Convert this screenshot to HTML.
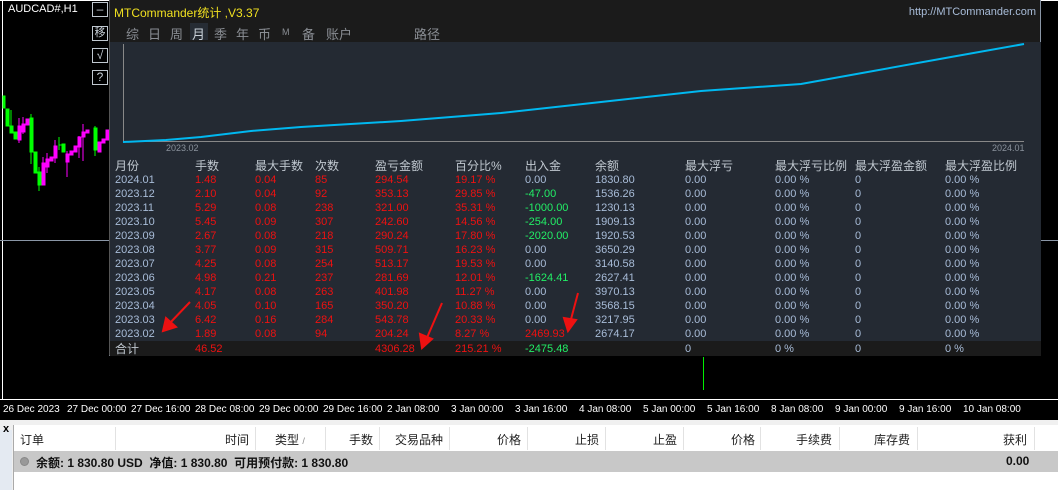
<!DOCTYPE html>
<html><head><meta charset="utf-8"><style>
*{margin:0;padding:0;box-sizing:border-box}
body{width:1058px;height:490px;background:#000;position:relative;overflow:hidden;font-family:"Liberation Sans","Noto Sans CJK SC",sans-serif}
.a{position:absolute;white-space:nowrap}
.btn{position:absolute;left:92px;width:16px;height:15px;border:1px solid #c0c8d0;color:#c8d0d8;font-size:12px;line-height:13px;text-align:center;background:#000}
#panel{position:absolute;left:109px;top:0;width:932px;height:356px;background:#1b1b1b;border-right:1px solid #8a96a6;border-bottom:1px solid #8a96a6;border-left:1px solid #555}
.t{font-size:13px;color:#8a8e94;position:absolute;top:24px}
.r{position:absolute;font-size:12px;line-height:14px;white-space:nowrap}
.m{color:#a8bcd8}.red{color:#ee1111}.g{color:#22ee66}.h{color:#c0c8d0}
.tl{position:absolute;top:404px;font-size:10px;color:#fff}
.bh{position:absolute;top:431px;font-size:12px;color:#222}
.dv{position:absolute;top:427px;width:1px;height:23px;background:#e2e2e2}
</style></head><body>
<div class="a" style="left:0;top:0;width:1058px;height:1px;background:#fff"></div>
<div class="a" style="left:2px;top:0;width:1px;height:400px;background:#fff"></div>
<div class="a" style="left:0;top:240px;width:109px;height:1px;background:#8a96a6"></div>
<div class="a" style="left:1041px;top:240px;width:17px;height:1px;background:#8a96a6"></div>
<div class="a" style="left:8px;top:3px;font-size:11px;color:#fff">AUDCAD#,H1</div>
<div class="btn" style="top:2px">–</div>
<div class="btn" style="top:26px;font-size:11px">移</div>
<div class="btn" style="top:48px">√</div>
<div class="btn" style="top:70px">?</div>
<svg class="a" style="left:0;top:60px" width="109" height="140">
<g fill="#00ff00" stroke="#00ff00">
<rect x="3" y="36" width="2" height="12"/><rect x="6" y="49" width="3" height="17"/><line x1="11" y1="50" x2="11" y2="72"/><rect x="10" y="66" width="3" height="7"/><rect x="14" y="72" width="3" height="7"/><rect x="30" y="58" width="3" height="34"/><line x1="31" y1="54" x2="31" y2="104"/><rect x="34" y="92" width="3" height="21"/><rect x="38" y="112" width="3" height="13"/><line x1="39" y1="107" x2="39" y2="131"/><rect x="62" y="84" width="3" height="8"/><line x1="59" y1="85" x2="63" y2="85"/><line x1="59" y1="77" x2="59" y2="90"/><rect x="94" y="68" width="3" height="22"/><line x1="95" y1="66" x2="95" y2="96"/></g>
<g fill="#ff00ff" stroke="#ff00ff">
<rect x="18" y="66" width="3" height="14"/><line x1="19" y1="58" x2="19" y2="83"/><rect x="22" y="64" width="3" height="8"/><line x1="23" y1="57" x2="23" y2="74"/><rect x="26" y="59" width="3" height="6"/><rect x="42" y="103" width="3" height="22"/><line x1="43" y1="97" x2="43" y2="125"/><rect x="46" y="99" width="3" height="8"/><line x1="47" y1="93" x2="47" y2="113"/><rect x="50" y="97" width="3" height="4"/><rect x="54" y="86" width="3" height="12"/><line x1="55" y1="80" x2="55" y2="103"/><rect x="66" y="94" width="3" height="8"/><line x1="67" y1="91" x2="67" y2="117"/><rect x="70" y="91" width="3" height="4"/><rect x="74" y="86" width="3" height="6"/><rect x="78" y="77" width="3" height="10"/><line x1="79" y1="76" x2="79" y2="98"/><rect x="82" y="72" width="3" height="5"/><line x1="83" y1="64" x2="83" y2="101"/><rect x="86" y="70" width="3" height="3"/><rect x="98" y="82" width="3" height="10"/><rect x="102" y="79" width="3" height="4"/><rect x="106" y="70" width="3" height="10"/></g>
</svg>
<div id="panel">
<div class="a" style="left:4px;top:4px;font-size:12px;color:#f0e020">MTCommander统计 ,V3.37</div>
<div class="a" style="right:4px;top:6px;font-size:11px;color:#a8bcd8">http://MTCommander.com</div>
<div class="t" style="left:16px">综</div><div class="t" style="left:38px">日</div><div class="t" style="left:60px">周</div>
<div class="a" style="left:80px;top:23px;width:18px;height:17px;background:#262c34"></div>
<div class="t" style="left:82px;color:#c8d0d8">月</div><div class="t" style="left:104px">季</div><div class="t" style="left:126px">年</div><div class="t" style="left:148px">币</div><div class="t" style="left:172px;font-size:9px;top:27px">M</div><div class="t" style="left:192px">备</div><div class="t" style="left:216px">账户</div><div class="t" style="left:304px">路径</div>
<div class="a" style="left:0;top:42px;width:931px;height:314px;background:#242a33"></div>
<svg class="a" style="left:-109px;top:0" width="1040" height="160">
<line x1="122.5" y1="44" x2="122.5" y2="142" stroke="#888"/>
<line x1="122" y1="141.5" x2="1023" y2="141.5" stroke="#888"/>
<polyline fill="none" stroke="#00b8f0" stroke-width="2" points="122,142 165,140 200,137 250,131 300,127 400,121 500,113 600,102 700,91 800,84 850,75 950,57 1023,44"/>
<text x="165" y="151" font-size="9" fill="#8a929c" font-family="Liberation Sans">2023.02</text>
<text x="991" y="151" font-size="9" fill="#8a929c" font-family="Liberation Sans">2024.01</text>
</svg>
<div class="a" style="left:0;top:341px;width:931px;height:15px;background:#1b1b1b"></div>
</div>
<div id="tb"></div>
<svg class="a" style="left:0;top:0" width="1058" height="400">
<g stroke="#ee1111" stroke-width="2" fill="#ee1111">
<line x1="190" y1="302" x2="168" y2="325"/><polygon points="163,331 166,318 176,327"/>
<line x1="442" y1="303" x2="426" y2="340"/><polygon points="422,348 420,334 432,339"/>
<line x1="578" y1="293" x2="570" y2="323"/><polygon points="568,331 564,318 576,320"/>
</g>
<line x1="703.5" y1="357" x2="703.5" y2="390" stroke="#00ee00"/>
<line x1="0" y1="399.5" x2="1058" y2="399.5" stroke="#fff"/>
<g stroke="#fff"><line x1="3.5" y1="400" x2="3.5" y2="404"/><line x1="67.5" y1="400" x2="67.5" y2="404"/><line x1="131.5" y1="400" x2="131.5" y2="404"/><line x1="195.5" y1="400" x2="195.5" y2="404"/><line x1="259.5" y1="400" x2="259.5" y2="404"/><line x1="323.5" y1="400" x2="323.5" y2="404"/><line x1="387.5" y1="400" x2="387.5" y2="404"/><line x1="451.5" y1="400" x2="451.5" y2="404"/><line x1="515.5" y1="400" x2="515.5" y2="404"/><line x1="579.5" y1="400" x2="579.5" y2="404"/><line x1="643.5" y1="400" x2="643.5" y2="404"/><line x1="707.5" y1="400" x2="707.5" y2="404"/><line x1="771.5" y1="400" x2="771.5" y2="404"/><line x1="835.5" y1="400" x2="835.5" y2="404"/><line x1="899.5" y1="400" x2="899.5" y2="404"/><line x1="963.5" y1="400" x2="963.5" y2="404"/></g>
</svg>
<div class="tl" style="left:3px">26 Dec 2023</div><div class="tl" style="left:67px">27 Dec 00:00</div><div class="tl" style="left:131px">27 Dec 16:00</div><div class="tl" style="left:195px">28 Dec 08:00</div><div class="tl" style="left:259px">29 Dec 00:00</div><div class="tl" style="left:323px">29 Dec 16:00</div><div class="tl" style="left:387px">2 Jan 08:00</div><div class="tl" style="left:451px">3 Jan 00:00</div><div class="tl" style="left:515px">3 Jan 16:00</div><div class="tl" style="left:579px">4 Jan 08:00</div><div class="tl" style="left:643px">5 Jan 00:00</div><div class="tl" style="left:707px">5 Jan 16:00</div><div class="tl" style="left:771px">8 Jan 08:00</div><div class="tl" style="left:835px">9 Jan 00:00</div><div class="tl" style="left:899px">9 Jan 16:00</div><div class="tl" style="left:963px">10 Jan 08:00</div>
<div class="a" style="left:0;top:420px;width:1058px;height:70px;background:#f0f0f0"></div>
<div class="a" style="left:0;top:430px;width:12px;height:60px;background:#e4eaf2"></div>
<div class="a" style="left:3px;top:423px;font-size:11px;font-weight:bold;color:#000">x</div>
<div class="a" style="left:13px;top:425px;width:1045px;height:65px;background:#fff;border-left:1px solid #aaa"></div>
<div class="a" style="left:14px;top:451px;width:1044px;height:21px;background:#c8c8c8"></div>
<div class="dv" style="left:115px"></div><div class="dv" style="left:255px"></div><div class="dv" style="left:325px"></div><div class="dv" style="left:379px"></div><div class="dv" style="left:449px"></div><div class="dv" style="left:527px"></div><div class="dv" style="left:605px"></div><div class="dv" style="left:683px"></div><div class="dv" style="left:760px"></div><div class="dv" style="left:839px"></div><div class="dv" style="left:917px"></div><div class="dv" style="left:1034px"></div>
<div class="bh" style="left:20px">订单</div>
<div class="bh" style="left:225px">时间</div><div class="bh" style="left:275px">类型 <span style="font-size:9px;color:#888">/</span></div><div class="bh" style="left:349px">手数</div><div class="bh" style="left:395px">交易品种</div><div class="bh" style="left:497px">价格</div><div class="bh" style="left:575px">止损</div><div class="bh" style="left:653px">止盈</div><div class="bh" style="left:731px">价格</div><div class="bh" style="left:796px">手续费</div><div class="bh" style="left:874px">库存费</div><div class="bh" style="left:1003px">获利</div>
<div class="a" style="left:20px;top:457px;width:9px;height:9px;border-radius:50%;background:#999;border:1px solid #888"></div>
<div class="a" style="left:36px;top:454px;font-size:12px;font-weight:bold;color:#111">余额: 1 830.80 USD&nbsp; 净值: 1 830.80&nbsp; 可用预付款: 1 830.80</div>
<div class="a" style="left:1006px;top:454px;font-size:12px;font-weight:bold;color:#111">0.00</div>
<script>
const rows=[["2024.01","1.48","0.04","85","294.54","19.17 %","0.00","1830.80"],["2023.12","2.10","0.04","92","353.13","29.85 %","-47.00","1536.26"],["2023.11","5.29","0.08","238","321.00","35.31 %","-1000.00","1230.13"],["2023.10","5.45","0.09","307","242.60","14.56 %","-254.00","1909.13"],["2023.09","2.67","0.08","218","290.24","17.80 %","-2020.00","1920.53"],["2023.08","3.77","0.09","315","509.71","16.23 %","0.00","3650.29"],["2023.07","4.25","0.08","254","513.17","19.53 %","0.00","3140.58"],["2023.06","4.98","0.21","237","281.69","12.01 %","-1624.41","2627.41"],["2023.05","4.17","0.08","263","401.98","11.27 %","0.00","3970.13"],["2023.04","4.05","0.10","165","350.20","10.88 %","0.00","3568.15"],["2023.03","6.42","0.16","284","543.78","20.33 %","0.00","3217.95"],["2023.02","1.89","0.08","94","204.24","8.27 %","2469.93","2674.17"]];
const X=[115,195,255,315,375,455,525,595,685,775,855,945];
let h='';
const hd=["月份","手数","最大手数","次数","盈亏金额","百分比%","出入金","余额","最大浮亏","最大浮亏比例","最大浮盈金额","最大浮盈比例"];
hd.forEach((t,i)=>h+=`<div class="r h" style="left:${X[i]}px;top:159px;font-size:12px">${t}</div>`);
rows.forEach((r,j)=>{const y=173+j*14;
const c=[r[0],r[1],r[2],r[3],r[4],r[5],r[6],r[7],"0.00","0.00 %","0","0.00 %"];
c.forEach((t,i)=>{let cl='m';if(i>=1&&i<=5)cl='red';if(i==6)cl=t.startsWith('-')?'g':(t=='0.00'?'m':'red');h+=`<div class="r ${cl}" style="left:${X[i]}px;top:${y}px;font-size:11px">${t}</div>`;});});
const tot=[[0,"合计","h"],[1,"46.52","red"],[4,"4306.28","red"],[5,"215.21 %","red"],[6,"-2475.48","g"],[8,"0","m"],[9,"0 %","m"],[10,"0","m"],[11,"0 %","m"]];
tot.forEach(([i,t,c])=>h+=`<div class="r ${c}" style="left:${X[i]}px;top:342px;font-size:${i==0?12:11}px">${t}</div>`);
document.getElementById('tb').innerHTML=h;
</script>
</body></html>
